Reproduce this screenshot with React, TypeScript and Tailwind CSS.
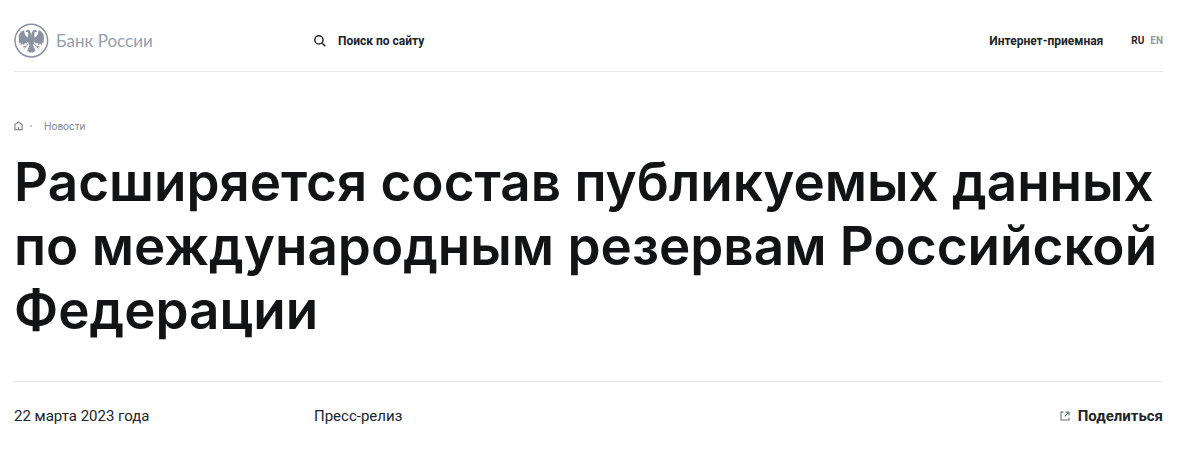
import type { ReactNode } from 'react'

interface MetaRowProps {
  date: string
  kind: string
  children: ReactNode
}

function BankLogo() {
  return (
    <svg className="size-9 shrink-0 text-[#8b92a0]" viewBox="0 0 36 36" aria-hidden="true">
      <circle cx="17.300" cy="17.600" r="16.300" fill="none" stroke="currentColor" strokeWidth="1.500" />
      <g fill="currentColor">
        {/* Wings */}
        <path d="M9.800 7.200C6.500 8.200 4.700 11 4.700 14.500L5.100 20.500L6.400 19.300L6.800 22.500L8.600 20.500L9.800 22.300L11.400 19.800L12.800 20.800L15 17.500L14 14.200C11.600 13.600 10.300 11.600 10.600 9.600Z" />
        <path d="M24.800 7.200C28.100 8.200 29.900 11 29.900 14.500L29.500 20.500L28.200 19.300L27.800 22.500L26 20.500L24.800 22.300L23.200 19.800L21.800 20.800L19.600 17.500L20.600 14.200C23 13.600 24.300 11.600 24 9.600Z" />
        {/* Heads and body */}
        <path d="M17.300 12.500C17 9.500 16.200 7.200 14.300 6.800C12.900 6.600 12 7.400 11.600 8.900L13.800 9C14.400 10.500 14.400 12.300 14 14.200C13.600 17.800 14.300 20.500 15.900 22.500L18.700 22.500C20.300 20.500 21 17.800 20.600 14.200C20.200 12.300 20.200 10.500 20.800 9L23 8.900C22.600 7.400 21.700 6.600 20.300 6.800C18.400 7.200 17.600 9.500 17.300 12.500Z" />
        {/* Tail */}
        <path d="M15.800 21.500L18.800 21.500L21.600 28.200L20 28.400L18.800 29.800L17.300 29.200L15.800 29.800L14.600 28.400L13 28.200Z" />
      </g>
      <path
        d="M14.400 20.800L11.800 23.600L9 23.800M11.800 23.600L10.300 25.600M20.200 20.800L22.800 23.600L25.600 23.800M22.800 23.600L24.300 25.600"
        fill="none"
        stroke="currentColor"
      />
    </svg>
  )
}

function SearchIcon() {
  return (
    <svg className="size-3" viewBox="0 0 12 12" fill="none" stroke="currentColor" strokeWidth="1.500" aria-hidden="true">
      <circle cx="4.900" cy="4.900" r="4.100" />
      <path d="M8 8L11.300 11.300" />
    </svg>
  )
}

function HomeIcon() {
  return (
    <svg className="h-2.5 w-2.5" viewBox="0 0 10 10" fill="none" stroke="currentColor" strokeWidth="1.200" aria-hidden="true">
      <path d="M0.900 8.600V3.600L4.500 1L8.100 3.600V8.600Z" />
      <path d="M4.500 5.800V8.600" />
    </svg>
  )
}

function ShareIcon() {
  return (
    <svg className="h-2.5 w-2.5 text-[#6b7280]" viewBox="0 0 10 10" fill="none" stroke="currentColor" strokeWidth="1.100" aria-hidden="true">
      <path d="M3.500 1.100H1V9H9V6.500" />
      <path d="M5.500 1.100H9V4.500M9 1.100L4.800 5.300" />
    </svg>
  )
}

function Header() {
  return (
    <header className="flex h-[72px] items-center border-b border-[#e6e7e9] pt-2.5">
      <a href="#" className="flex w-[300px] items-center gap-1.5 text-[#8b92a0]">
        <BankLogo />
        <span className="font-['Lato',sans-serif] text-[17px] leading-6 whitespace-nowrap text-[#989eaa]">Банк России</span>
      </a>
      <button type="button" className="flex items-center gap-3 font-['Roboto',sans-serif] text-xs leading-4 font-bold">
        <SearchIcon />
        Поиск по сайту
      </button>
      <nav className="ml-auto flex items-center gap-7 font-['Roboto',sans-serif] text-xs leading-4 font-bold">
        <a href="#">Интернет-приемная</a>
        <div className="flex gap-1.5 text-[10px]">
          <a href="#">RU</a>
          <a href="#" className="text-[#9299a3]">EN</a>
        </div>
      </nav>
    </header>
  )
}

function Breadcrumbs() {
  return (
    <nav aria-label="Навигация" className="mt-12 flex items-center text-[10px] leading-3 text-[#80868f]">
      <a href="#" aria-label="Главная">
        <HomeIcon />
      </a>
      <span className="mr-3 ml-1.5 size-0.5 rounded-full bg-[#b4b8bf]" />
      <a href="#">Новости</a>
    </nav>
  )
}

function MetaRow({ date, kind, children }: MetaRowProps) {
  return (
    <div className="mt-[39px] flex items-center border-t border-[#e6e7e9] pt-6 font-['Roboto',sans-serif] text-[15px] leading-5">
      <time dateTime="2023-03-22" className="w-[300px]">{date}</time>
      <span>{kind}</span>
      <div className="ml-auto">{children}</div>
    </div>
  )
}

export default function App() {
  return (
    <div className="bg-white pr-[37px] pb-6 pl-3.5 font-['Inter',sans-serif] text-[#20242a]">
      <Header />
      <main>
        <Breadcrumbs />
        <h1 className="mt-[18px] -mr-4 text-[53px] leading-16 font-semibold text-[#111315]">
          Расширяется состав публикуемых данных по международным резервам Российской Федерации
        </h1>
        <MetaRow date="22 марта 2023 года" kind="Пресс-релиз">
          <button type="button" className="flex items-center gap-2 font-bold">
            <ShareIcon />
            Поделиться
          </button>
        </MetaRow>
      </main>
    </div>
  )
}
